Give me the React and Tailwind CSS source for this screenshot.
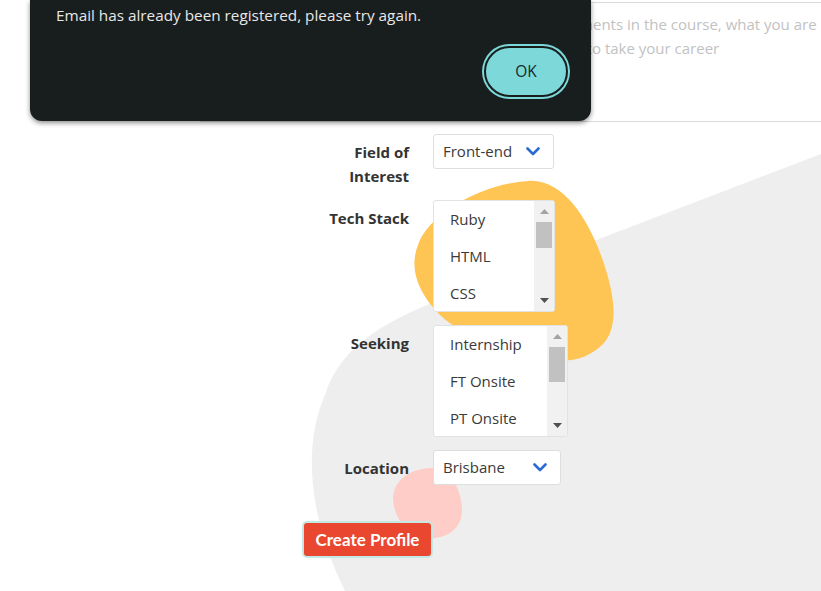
import React from 'react';

const FONT = { fontFamily: '"Open Sans", "Noto Sans", sans-serif' };

const Chevron = () => (
  <svg width="14" height="9" viewBox="0 0 14 9" fill="none">
    <polyline points="1.5,1.5 7,7 12.5,1.5" stroke="#2b6cd4" strokeWidth="2.6" strokeLinecap="round" strokeLinejoin="round" />
  </svg>
);

const Select = ({ value, width }) => (
  <div className={`${width} h-[35px] bg-white border border-[#dedede] rounded-[3px] flex items-center justify-between pl-[9px] pr-[13px] text-[15px] text-[#3a3a3a]`}>
    <span>{value}</span>
    <Chevron />
  </div>
);

const Arrow = ({ up, color }) => (
  <svg width="9" height="5" viewBox="0 0 9 5">
    <polygon points={up ? '0,5 4.5,0 9,5' : '0,0 9,0 4.5,5'} fill={color} />
  </svg>
);

const ListBox = ({ items, width, thumb }) => (
  <div className={`${width} h-[112px] bg-white border border-[#e2e2e2] rounded-[3px] flex overflow-hidden`}>
    <div className="flex-1 pl-[16px]">
      {items.map((it) => (
        <div key={it} className="h-[37px] leading-[37px] text-[15px] text-[#3a3a3a] whitespace-nowrap">{it}</div>
      ))}
    </div>
    <div className="w-[20px] bg-[#f1f1f1] flex flex-col">
      <div className="h-[21px] flex items-center justify-center"><Arrow up color="#a3a3a3" /></div>
      <div className={`${thumb} mx-[2px] bg-[#c1c1c1]`} />
      <div className="flex-1" />
      <div className="h-[22px] flex items-center justify-center"><Arrow color="#505050" /></div>
    </div>
  </div>
);

const Row = ({ label, children, className }) => (
  <div className={`flex items-start ${className}`}>
    <div className="w-[100px] pt-[6px] text-right text-[15px] leading-[24px] font-bold text-[#333]">{label}</div>
    <div className="ml-[24px]">{children}</div>
  </div>
);

export default function App() {
  return (
    <div className="relative w-[821px] h-[591px] overflow-hidden bg-white" style={FONT}>
      {/* background decoration */}
      <svg className="absolute inset-0" width="821" height="591" viewBox="0 0 821 591">
        <path d="M821 154 L450 296 C390 318 340 345 325 395 C305 440 305 510 345 591 L821 591 Z" fill="#eeeeee" />
        <path d="M528 181 C562 178 588 218 602 258 C614 292 620 326 603 344 C590 357 574 362 556 360 C510 354 462 336 440 315 C420 295 408 270 418 245 C428 215 480 184 528 181 Z" fill="#fec554" />
        <path d="M430 468 C450 466 462 490 462 510 C462 530 445 540 425 538 C405 535 393 515 393 497 C395 478 412 469 430 468 Z" fill="#ffcdc7" />
      </svg>

      <div className="relative pt-[2px]">
        {/* bio textarea, scrolled partly out of view */}
        <div className="ml-[200px] w-[700px] h-[120px] border border-[#dadada] bg-white pt-[9px] text-[15px] leading-[24px] text-[#c2c2c2]">
          <div className="flex whitespace-nowrap">
            <span className="w-[392px] overflow-hidden text-right">Tell us about your achievem</span>
            <span>ents in the course, what you are</span>
          </div>
          <div className="flex whitespace-nowrap">
            <span className="w-[391px] overflow-hidden text-right">looking for and where you want t</span>
            <span>o take your career</span>
          </div>
        </div>

        <div className="pl-[309px] mt-[12px]">
          <Row label="Field of Interest" className="mb-[12px]">
            <Select value="Front-end" width="w-[121px]" />
          </Row>
          <Row label="Tech Stack" className="mb-[13px]">
            <ListBox items={['Ruby', 'HTML', 'CSS']} width="w-[122px]" thumb="h-[26px]" />
          </Row>
          <Row label="Seeking" className="mb-[13px]">
            <ListBox items={['Internship', 'FT Onsite', 'PT Onsite']} width="w-[135px]" thumb="h-[35px]" />
          </Row>
          <Row label="Location">
            <Select value="Brisbane" width="w-[128px]" />
          </Row>
        </div>

        <div className="pl-[302px] mt-[36px]">
          <button
            className="w-[131px] h-[37px] border-2 border-[#c4e9e5] rounded-[5px] bg-[#e9472f] text-white text-[17px] font-bold"
            style={{ fontFamily: 'Lato, "Open Sans", sans-serif' }}
          >
            Create Profile
          </button>
        </div>
      </div>

      {/* alert dialog */}
      <div className="absolute left-[30px] top-0 w-[561px] h-[121px] rounded-b-[12px] bg-[#181d1d] shadow-[0_2px_5px_rgba(0,0,0,0.45)] flex flex-col justify-between pl-[26px] pr-[23px] pb-[24px]">
        <p className="pt-[4px] text-[15.3px] leading-[22px] text-[#e8e8e8]">Email has already been registered, please try again.</p>
        <div className="flex justify-end">
          <button className="w-[84px] h-[51px] rounded-full bg-[#7dd8d9] border-2 border-[#181d1d] ring-2 ring-[#7dd8d9] text-[15.5px] text-[#17292a]">
            OK
          </button>
        </div>
      </div>
    </div>
  );
}
